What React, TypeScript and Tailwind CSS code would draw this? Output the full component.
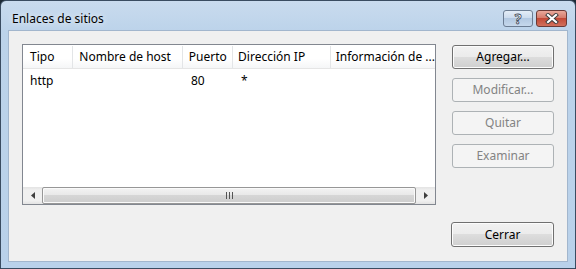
import React from 'react';

const cols = [
  { label: 'Tipo', w: 'w-[51px]', pl: 'pl-[7px]' },
  { label: 'Nombre de host', w: 'w-[111px]', pl: 'pl-[6px]' },
  { label: 'Puerto', w: 'w-[51px]', pl: 'pl-[6px]' },
  { label: 'Dirección IP', w: 'w-[99px]', pl: 'pl-[5px]' },
];

const btnBase = 'flex items-center justify-center rounded-[3px] border text-[12px]';
const btnOn =
  'border-[#707070] text-black bg-[linear-gradient(to_bottom,#f2f2f2_0%,#ebebeb_50%,#dddddd_50%,#cfcfcf_100%)] shadow-[inset_0_0_0_1px_#fcfcfc]';
const btnOff = 'border-[#adb2b5] bg-[#f4f4f4] text-[#838383]';

function Arrow({ dir }: { dir: 'left' | 'right' }) {
  return (
    <div className="flex w-[19px] items-center justify-center">
      <svg width="4" height="7" viewBox="0 0 4 7">
        {dir === 'left' ? (
          <path d="M4 0 L0 3.5 L4 7 Z" fill="#404040" />
        ) : (
          <path d="M0 0 L4 3.5 L0 7 Z" fill="#404040" />
        )}
      </svg>
    </div>
  );
}

export default function App() {
  return (
    <div className="h-[269px] w-[576px] bg-[#1d2a36] font-['Noto_Sans','Open_Sans',sans-serif] text-[12px] leading-none">
      <div className="flex h-full w-full flex-col rounded-t-[6px] border border-[#3a4c61] bg-[linear-gradient(to_bottom,#c9dbee_0%,#bcd3ea_30px,#b9d1ea_100%)] px-[7px] pb-[6px]">
        {/* Title bar */}
        <div className="flex h-[29px] items-start">
          <span className="ml-[4px] mt-[12px] flex-1 text-black [text-shadow:0_0_6px_#ffffff]">
            Enlaces de sitios
          </span>
          <div className="mt-[9px] mr-[1px] flex gap-[3px]">
            <div className="flex h-[17px] w-[30px] items-center justify-center rounded-[3px] border border-[#6b7c92] bg-[linear-gradient(to_bottom,#e4edf7_0%,#c9d9ec_50%,#b2c8e1_50%,#c6d8ec_100%)]">
              <span className="text-[14px] font-bold text-white [-webkit-text-stroke:0.8px_#3b4756]">?</span>
            </div>
            <div className="flex h-[17px] w-[31px] items-center justify-center rounded-[3px] border border-[#6b3a36] bg-[linear-gradient(to_bottom,#e9a99b_0%,#d47767_50%,#c34a37_50%,#d1705c_100%)]">
              <svg width="14" height="11" viewBox="0 0 14 11">
                <path d="M3 2 L11 9 M11 2 L3 9" stroke="#3b3b3b" strokeWidth="4" strokeLinecap="square" />
                <path d="M3 2 L11 9 M11 2 L3 9" stroke="#ffffff" strokeWidth="2.2" strokeLinecap="square" />
              </svg>
            </div>
          </div>
        </div>

        {/* Client area */}
        <div className="flex flex-1 flex-col border border-[#a2b6cd] bg-[#f0f0f0] px-[13px] pt-[13px] pb-[14px]">
          <div className="flex justify-between">
            {/* List view */}
            <div className="flex h-[161px] w-[414px] flex-col border border-[#828790] bg-white">
              <div className="flex h-[24px] border-b border-[#e5e5e5] bg-[linear-gradient(to_bottom,#ffffff_0%,#ffffff_60%,#f5f6f7_100%)] pt-[1px]">
                {cols.map((c) => (
                  <div key={c.label} className={`flex items-center border-r border-[#e3e5e7] ${c.w} ${c.pl}`}>
                    {c.label}
                  </div>
                ))}
                <div className="flex flex-1 items-center pl-[5px] whitespace-nowrap">Información de ...</div>
              </div>
              <div className="flex h-[23px] items-center pt-[1px]">
                <div className="w-[51px] pl-[7px]">http</div>
                <div className="w-[111px]" />
                <div className="w-[51px] pl-[6px]">80</div>
                <div className="w-[99px] pl-[5px]">*</div>
              </div>
              <div className="flex-1" />
              {/* Horizontal scrollbar */}
              <div className="flex h-[17px] bg-[linear-gradient(to_bottom,#e3e3e3_0%,#f0f0f0_20%,#f0f0f0_80%,#e3e3e3_100%)]">
                <Arrow dir="left" />
                <div className="flex flex-1 items-center justify-center rounded-[2px] border border-[#979797] bg-[linear-gradient(to_bottom,#f3f3f3_0%,#e8e8e8_50%,#d6d6d6_50%,#cdcdcd_100%)] shadow-[inset_0_0_0_1px_#fafafa]">
                  <div className="flex gap-[2px]">
                    <div className="h-[7px] w-[1px] bg-[#555]" />
                    <div className="h-[7px] w-[1px] bg-[#555]" />
                    <div className="h-[7px] w-[1px] bg-[#555]" />
                  </div>
                </div>
                <Arrow dir="right" />
              </div>
            </div>

            {/* Side buttons */}
            <div className="mt-[1px] flex w-[102px] flex-col gap-[9px]">
              <div className={`${btnBase} ${btnOn} h-[24px]`}>Agregar...</div>
              <div className={`${btnBase} ${btnOff} h-[24px]`}>Modificar...</div>
              <div className={`${btnBase} ${btnOff} h-[24px]`}>Quitar</div>
              <div className={`${btnBase} ${btnOff} h-[24px]`}>Examinar</div>
            </div>
          </div>

          <div className="mt-auto flex justify-end">
            <div className={`${btnBase} ${btnOn} h-[25px] w-[103px]`}>Cerrar</div>
          </div>
        </div>
      </div>
    </div>
  );
}
